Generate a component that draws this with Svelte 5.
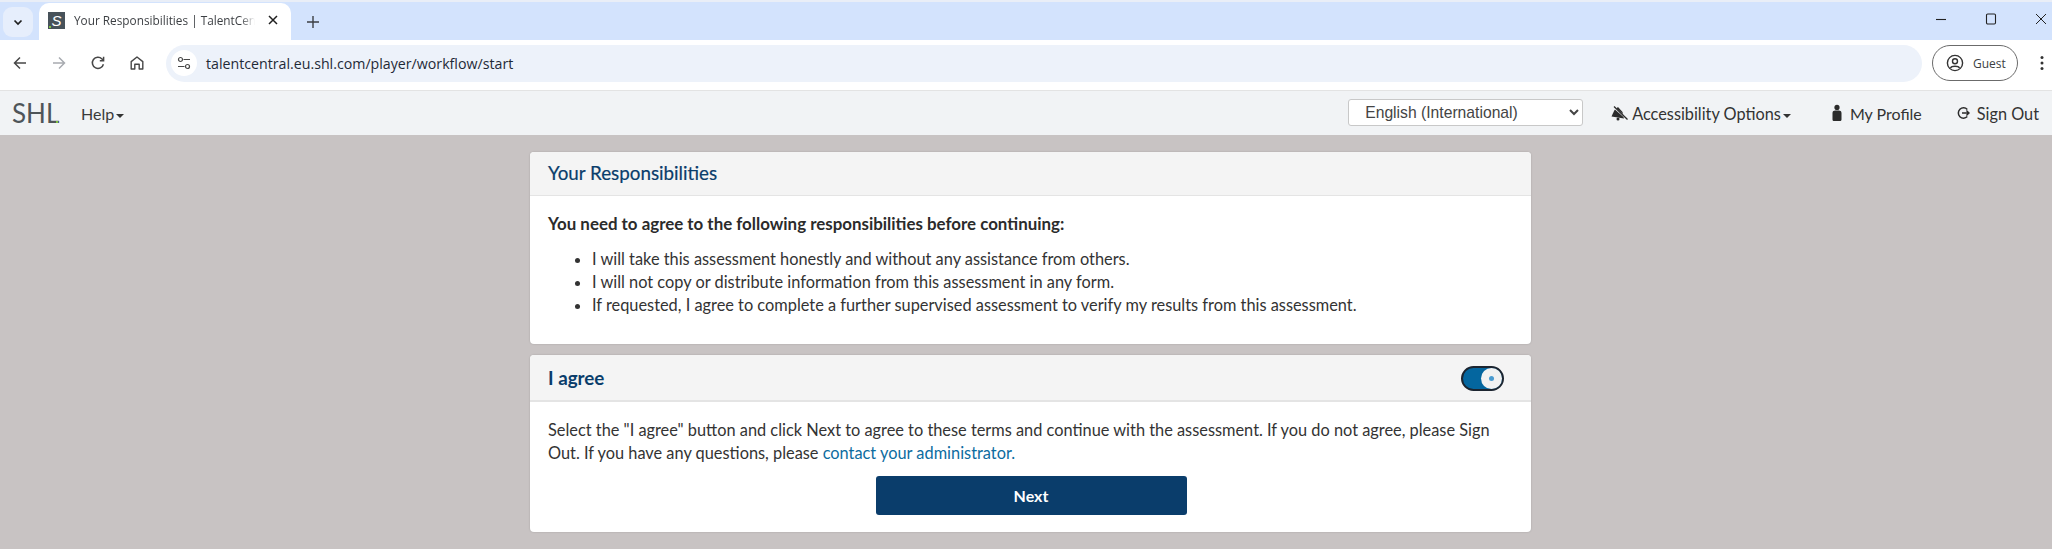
<script>
  const items = [
    'I will take this assessment honestly and without any assistance from others.',
    'I will not copy or distribute information from this assessment in any form.',
    'If requested, I agree to complete a further supervised assessment to verify my results from this assessment.'
  ];
</script>

<div class="page">
  <div class="tabstrip">
    <div class="tabs-left">
      <div class="tabsearch">
        <svg width="12" height="12" viewBox="0 0 12 12"><path d="M2.500 4.500 6 8l3.500-3.500" fill="none" stroke="#1f1f1f" stroke-width="1.700"/></svg>
      </div>
      <div class="tab">
        <div class="favicon"><span>S</span><i></i></div>
        <span class="tabtitle">Your Responsibilities | TalentCentral</span>
        <svg class="tabclose" width="12" height="12" viewBox="0 0 12 12"><path d="M2 2l8 8M10 2l-8 8" stroke="#1f1f1f" stroke-width="1.500"/></svg>
      </div>
      <svg class="newtab" width="14" height="14" viewBox="0 0 14 14"><path d="M7 1v12M1 7h12" stroke="#3c3f43" stroke-width="1.400"/></svg>
    </div>
    <div class="winctl">
      <svg width="12" height="12" viewBox="0 0 12 12"><path d="M1 6.500h10" stroke="#222" stroke-width="1.100"/></svg>
      <svg width="12" height="12" viewBox="0 0 12 12"><rect x="1.500" y="1" width="9" height="10" rx="1.200" fill="none" stroke="#222" stroke-width="1.100"/></svg>
      <svg width="12" height="12" viewBox="0 0 12 12"><path d="M1 1l10 10M11 1L1 11" stroke="#222" stroke-width="1"/></svg>
    </div>
  </div>

  <div class="toolbar">
    <div class="navbtns">
      <svg width="16" height="16" viewBox="0 0 16 16"><path d="M14 8H2.500M8 2.500 2.500 8 8 13.500" fill="none" stroke="#474747" stroke-width="1.500"/></svg>
      <svg width="16" height="16" viewBox="0 0 16 16"><path d="M2 8h11.500M8 2.500 13.500 8 8 13.500" fill="none" stroke="#a8abb0" stroke-width="1.500"/></svg>
      <svg width="16" height="16" viewBox="0 0 16 16"><path d="M13.400 9.200A5.600 5.600 0 1 1 12 3.900L13.600 5.500M13.600 1.800v3.900H9.800" fill="none" stroke="#474747" stroke-width="1.500"/></svg>
      <svg width="16" height="16" viewBox="0 0 16 16"><path d="M2.200 14V6.600L8 2l5.800 4.600V14h-3.600V9.200H5.800V14z" fill="none" stroke="#474747" stroke-width="1.400" stroke-linejoin="round"/></svg>
    </div>
    <div class="omnibox">
      <div class="siteinfo">
        <svg width="14" height="14" viewBox="0 0 14 14"><circle cx="3.500" cy="3.500" r="2" fill="none" stroke="#474747" stroke-width="1.200"/><path d="M6.500 3.500H13M1 10.500h6.500" stroke="#474747" stroke-width="1.200"/><circle cx="10.500" cy="10.500" r="2" fill="none" stroke="#474747" stroke-width="1.200"/></svg>
      </div>
      <span class="url">talentcentral.eu.shl.com/player/workflow/start</span>
    </div>
    <div class="guest">
      <svg width="18" height="18" viewBox="0 0 18 18"><circle cx="9" cy="9" r="7.600" fill="none" stroke="#333" stroke-width="1.400"/><circle cx="9" cy="7.200" r="2.500" fill="none" stroke="#333" stroke-width="1.400"/><path d="M4.500 14c1-2.400 8-2.400 9 0" fill="none" stroke="#333" stroke-width="1.400"/></svg>
      <span>Guest</span>
    </div>
    <svg class="kebab" width="4" height="16" viewBox="0 0 4 16"><circle cx="2" cy="2.500" r="1.500" fill="#333"/><circle cx="2" cy="8" r="1.500" fill="#333"/><circle cx="2" cy="13.500" r="1.500" fill="#333"/></svg>
  </div>

  <nav class="navbar">
    <div class="nav-left">
      <div class="logo">SHL<i></i></div>
      <span class="help">Help<b class="caret"></b></span>
    </div>
    <div class="nav-right">
      <select class="lang"><option>English (International)</option></select>
      <span class="navitem access">
        <svg width="18" height="15" viewBox="0 0 18 15"><path d="M8 1 4.500 4 1.500 10.500 14 12.500 12.500 6z" fill="#2b2b2b"/><path d="M3 .5l13 11.500" stroke="#f1f3f5" stroke-width="1.800"/><path d="M4 .5l13.500 13" stroke="#2b2b2b" stroke-width="1.300"/><circle cx="8" cy="13" r="1.500" fill="#2b2b2b"/></svg>
        <span>Accessibility Options<b class="caret"></b></span>
      </span>
      <span class="navitem profile">
        <svg width="12" height="18" viewBox="0 0 12 18"><circle cx="6" cy="3.400" r="2.600" fill="#2b2b2b"/><path d="M1.500 9c0-1.600 1.400-2.400 2.600-2.400h3.800c1.200 0 2.600.8 2.600 2.400v6.500c0 1-.8 1.500-1.600 1.500H3.100c-.8 0-1.600-.5-1.600-1.500z" fill="#2b2b2b"/></svg>
        <span>My Profile</span>
      </span>
      <span class="navitem signout">
        <svg width="14" height="14" viewBox="0 0 14 14"><path d="M11.300 3.400A5.200 5.200 0 1 0 11.300 10.600" fill="none" stroke="#2b2b2b" stroke-width="1.500"/><path d="M6 7h7M10.400 4.500 13 7l-2.600 2.500" fill="none" stroke="#2b2b2b" stroke-width="1.400"/></svg>
        <span>Sign Out</span>
      </span>
    </div>
  </nav>

  <main class="main">
    <section class="card first">
      <header class="head h1"><h2>Your Responsibilities</h2></header>
      <div class="body b1">
        <p class="lead">You need to agree to the following responsibilities before continuing:</p>
        <ul>
          {#each items as item}<li>{item}</li>{/each}
        </ul>
      </div>
    </section>

    <section class="card second">
      <header class="head h2"><h2 class="strong">I agree</h2>
        <div class="toggle"><div class="knob"><i></i></div></div>
      </header>
      <div class="body b2">
        <p class="terms">Select the "I agree" button and click Next to agree to these terms and continue with the assessment. If you do not agree, please Sign Out. If you have any questions, please <a href="#top">contact your administrator.</a></p>
        <button class="next">Next</button>
      </div>
    </section>
  </main>
</div>

<style>
  :global(body) { margin: 0; background: #c8c3c3; }
  .page { width: 2052px; height: 549px; overflow: hidden; background: #c8c3c3; font-family: Lato, "Liberation Sans", Arial, sans-serif; color: #2b2b2b; }

  .tabstrip { height: 38px; border-top: 2px solid #e9eef7; background: #d3e3fd; display: flex; justify-content: space-between; align-items: flex-start; }
  .tabs-left { display: flex; align-items: center; }
  .tabsearch { width: 30px; height: 30px; margin: 1px 0 0 3px; background: #e6eefc; border-radius: 9px; display: flex; align-items: center; justify-content: center; }
  .tab { width: 252px; height: 38px; margin-left: 6px; margin-top: 1px; background: #fff; border-radius: 10px 10px 0 0; display: flex; align-items: center; box-sizing: border-box; padding: 0 12px 4px 9px; }
  .favicon { width: 17px; height: 17px; background: #47525a; position: relative; flex: none; display: flex; align-items: center; justify-content: center; }
  .favicon span { color: #fff; font: italic 15px "Liberation Sans", sans-serif; line-height: 17px; }
  .favicon i { position: absolute; left: 1px; bottom: 1px; width: 2px; height: 2px; background: #7fc241; }
  .tabtitle { flex: 1; margin-left: 9px; font: 11.800px "Open Sans", sans-serif; color: #3c3f43; white-space: nowrap; overflow: hidden; -webkit-mask-image: linear-gradient(to right, #000 92%, transparent); mask-image: linear-gradient(to right, #000 92%, transparent); }
  .tabclose { margin-left: 12px; flex: none; }
  .newtab { margin-left: 15px; margin-top: 1px; }
  .winctl { display: flex; align-items: center; gap: 38px; height: 34px; padding-right: 5px; }

  .toolbar { height: 50px; box-sizing: border-box; background: #fff; display: flex; align-items: center; padding: 0 8px 4px 12px; }
  .navbtns { display: flex; gap: 23px; width: 154px; flex: none; }
  .omnibox { width: 1756px; flex: none; height: 37px; background: #edf2fa; border-radius: 19px; display: flex; align-items: center; padding-left: 5px; box-sizing: border-box; }
  .siteinfo { width: 26px; height: 26px; background: #fff; border-radius: 50%; display: flex; align-items: center; justify-content: center; flex: none; }
  .url { margin-left: 9px; font: 14.200px "Open Sans", sans-serif; color: #1f2a37; }
  .guest { width: 86px; height: 36px; box-sizing: border-box; margin-left: 10px; border: 1px solid #6b6b6b; border-radius: 18px; display: flex; align-items: center; gap: 9px; padding-left: 13px; font: 12px "Open Sans", sans-serif; color: #3c3f43; flex: none; }
  .kebab { margin-left: 22px; flex: none; }

  .navbar { height: 45px; background: #f1f3f5; border-top: 1px solid #e3e3e3; box-sizing: border-box; display: flex; justify-content: space-between; align-items: center; padding: 0 13px 0 12px; }
  .nav-left, .nav-right { display: flex; align-items: center; }
  .logo { font-size: 26px; font-weight: 400; line-height: 30px; color: #4f5559; position: relative; width: 46px; }
  .logo i { position: absolute; right: 0; bottom: 5px; width: 2px; height: 2px; background: #7fc241; }
  .help { margin-left: 23px; font-size: 16px; color: #3a3a3a; }
  .caret { display: inline-block; margin-left: 2px; border: 4px solid transparent; border-top-color: #333; border-bottom: 0; vertical-align: 2px; }
  .lang { width: 235px; height: 27px; margin-top: -2px; background: #fff; border: 1px solid #c8c8c8; border-radius: 3px; font: 15.700px "Liberation Sans", sans-serif; color: #444; padding: 0 0 0 12px; }
  .navitem { display: inline-flex; align-items: center; gap: 7px; font-size: 16.300px; color: #333; white-space: nowrap; }
  .access { margin-left: 27px; gap: 4px; }
  .profile { margin-left: 40px; font-size: 16px; }
  .signout { margin-left: 34px; }

  .main { width: 1001px; margin: 17px 0 0 530px; }
  .card { background: #fff; border-radius: 4px; overflow: hidden; box-shadow: 0 0 2px rgba(0,0,0,.18); }
  .second { margin-top: 11px; }
  .head { background: #f4f4f4; border-bottom: 1px solid #e4e4e4; box-sizing: border-box; padding: 0 27px 0 18px; display: flex; align-items: center; justify-content: space-between; }
  .h1 { height: 44px; padding-bottom: 3px; }
  .h2 { height: 47px; border-bottom-width: 2px; }
  h2 { margin: 0; font-size: 18.800px; font-weight: 400; color: #0a3d6b; -webkit-text-stroke: .2px #0a3d6b; }
  .strong { font-weight: 700; -webkit-text-stroke: 0; }
  .toggle { width: 43px; height: 25px; box-sizing: border-box; border: 2px solid #1c2530; border-radius: 13px; background: #04669f; display: flex; justify-content: flex-end; align-items: center; margin-top: 2px; }
  .knob { width: 21px; height: 21px; border-radius: 50%; background: #f1f1f1; display: flex; align-items: center; justify-content: center; }
  .knob i { width: 5px; height: 5px; border-radius: 50%; background: #4a9bd0; }
  .body { padding: 0 17px 0 18px; font-size: 16.350px; line-height: 23px; color: #333; }
  .b1 { height: 148px; box-sizing: border-box; padding-top: 16px; }
  .lead { margin: 0; font-weight: 700; font-size: 16.900px; color: #2b2b2b; }
  ul { margin: 12px 0 0; padding: 0 0 0 44px; }
  .b2 { height: 130px; box-sizing: border-box; padding-top: 16px; display: flex; flex-direction: column; }
  .terms { margin: 0; }
  a { color: #0c6c9f; text-decoration: none; }
  .next { align-self: center; margin: 12px 0 0 0; width: 311px; height: 39px; background: #0a3d6b; color: #fff; border: 0; border-radius: 3px; font: 700 16px Lato, sans-serif; }
</style>
